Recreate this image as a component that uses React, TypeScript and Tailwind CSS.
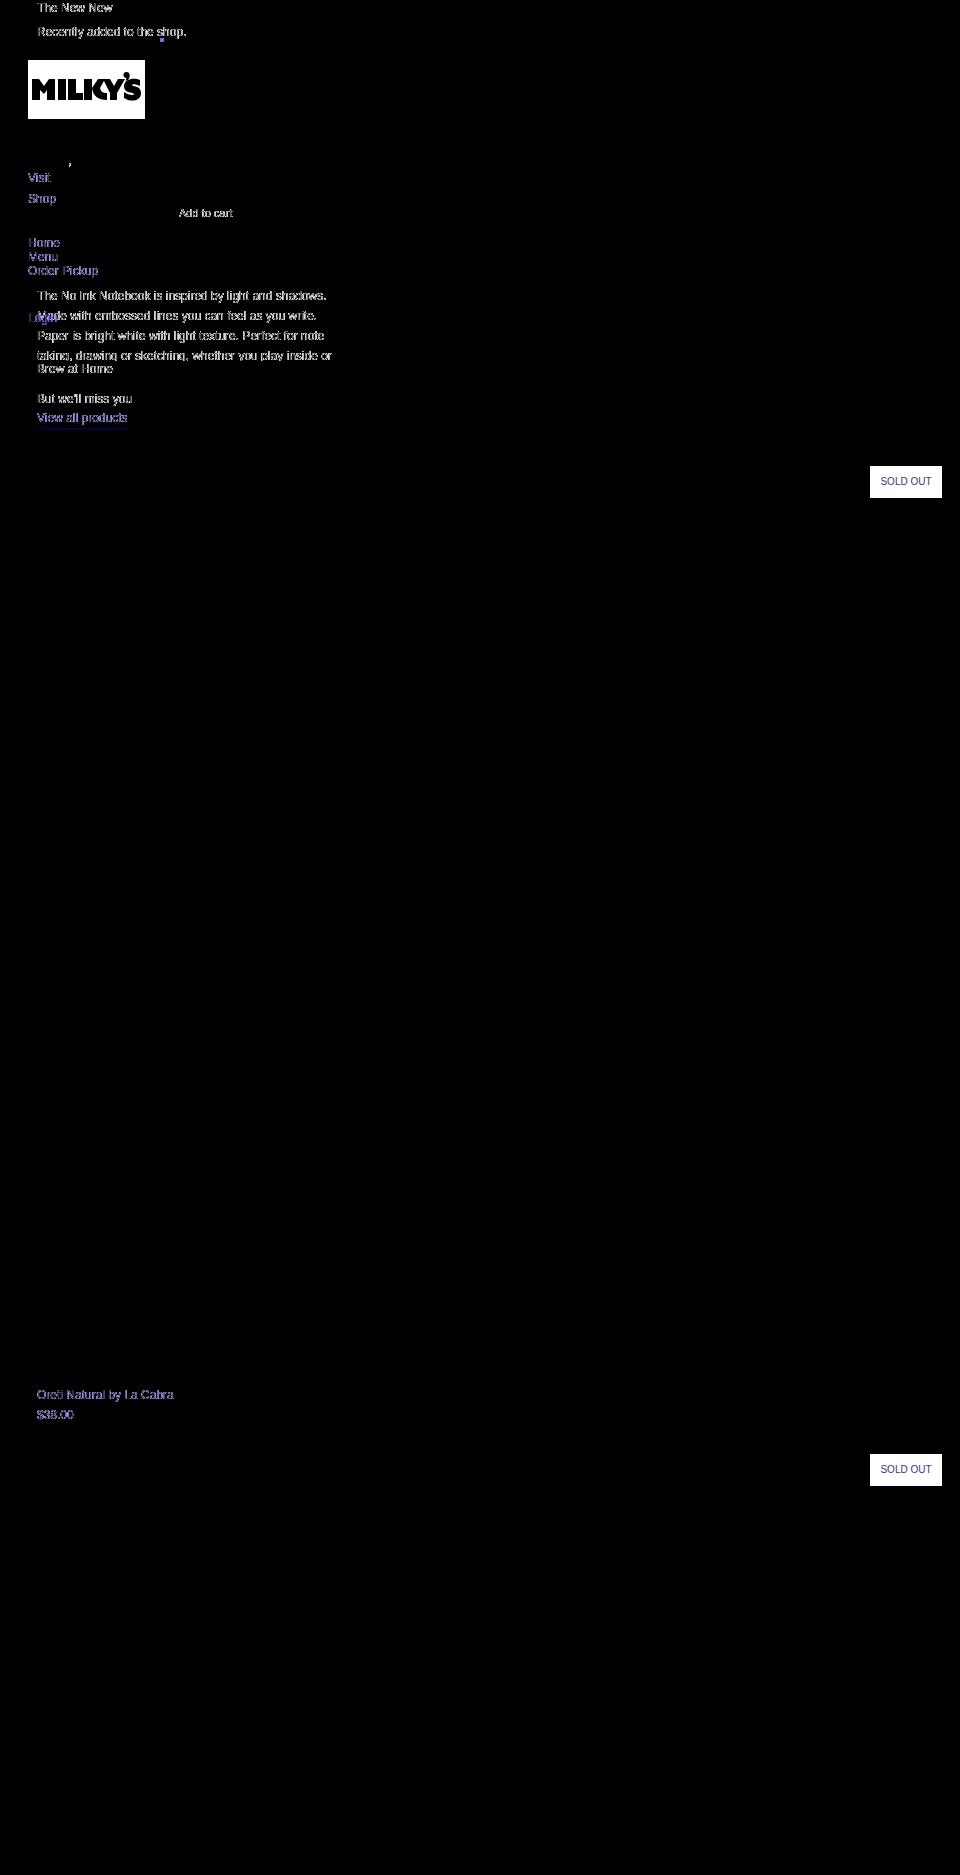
const links = ["Home", "Menu", "Order Pickup"];

function EdgeFilter() {
  return (
    <svg width="0" height="0" className="absolute" aria-hidden="true">
      <filter id="edge" x="-5%" y="-20%" width="110%" height="140%" colorInterpolationFilters="sRGB">
        <feComponentTransfer>
          <feFuncA type="table" tableValues="0 0.85 0.85 0.6 0.25" />
        </feComponentTransfer>
      </filter>
    </svg>
  );
}

function Logo() {
  return (
    <svg viewBox="0 0 117 59" className="block h-[59px] w-[117px] bg-white" role="img" aria-label="Milky's">
      <g fill="#000">
        <path d="M4 19h7l5 7 5-7h6v21h-8V30l-3 4-4-4v10H4z" />
        <path d="M30 19h8v21h-8zM40 19h8v14h7v7H40zM56 19h8v21h-8z" />
        <path d="M64 28l6-9h7l-5 9c1 4 3 5 7 5v7c-9 0-14-4-15-12z" />
        <path d="M75 19h7l4 7 4-7h7l-8 14v7h-7v-7z" />
        <circle cx="98.500" cy="15" r="3" />
        <path d="M101.500 15c0 4-1 5-4 6l2-6z" />
        <path d="M112 20v6c-4-2-8-2-8-1 0 2 9 0 9 8 0 9-11 9-17 5v-6c4 3 10 4 10 2s-10 0-10-8c0-7 10-9 16-6z" />
      </g>
    </svg>
  );
}

function SoldOut() {
  return (
    <span className="flex h-8 w-[72px] items-center justify-center bg-white text-[10px] leading-4 text-[#3c3484]">
      SOLD OUT
    </span>
  );
}

export default function App() {
  return (
    <main className="min-h-screen overflow-hidden bg-black font-['Liberation_Sans',Arial,sans-serif] text-xs leading-5 text-white">
      <EdgeFilter />
      <header className="pl-7">
        <div className="h-[60px] pl-[9px]">
          <h2 className="h-[22px] leading-4 [filter:url(#edge)]">The New New</h2>
          <div className="relative w-fit">
            <p className="[filter:url(#edge)]">Recently added to the shop.</p>
            <span className="absolute top-4 left-[123px] h-1 w-1 bg-[#7474d8]" />
          </div>
        </div>
        <Logo />
        <div className="h-[49px] pt-9 pl-10 leading-3 [filter:url(#edge)]">,</div>
        <nav className="flex flex-col items-start text-[#a8a8ff]">
          <a href="#visit" className="leading-5 [filter:url(#edge)]">Visit</a>
          <a href="#shop" className="mt-px leading-5 [filter:url(#edge)]">Shop</a>
        </nav>
        <button type="button" className="-mt-1 ml-[151px] block h-4 text-[11px] leading-3 [filter:url(#edge)]">
          Add to cart
        </button>
        <nav className="mt-[15px] flex flex-col items-start text-[#a8a8ff]">
          {links.map((label) => (
            <a key={label} href="#menu" className="leading-[14px] [filter:url(#edge)]">{label}</a>
          ))}
        </nav>
      </header>
      <section className="relative mt-2 px-[37px]">
        <p className="h-[75px] max-w-[310px] overflow-hidden [filter:url(#edge)]">
          The No Ink Notebook is inspired by light and shadows. Made with embossed lines you can feel as you write. Paper is bright white with light texture. Perfect for note taking, drawing or sketching, whether you play inside or
        </p>
        <a href="#login" className="absolute top-[22px] left-7 leading-5 text-[#7c7cff] [filter:url(#edge)]">Login</a>
        <h3 className="leading-4 [filter:url(#edge)]">Brew at Home</h3>
        <p className="mt-3 [filter:url(#edge)]">But we'll miss you</p>
        <a href="#products" className="-mt-px block w-fit border-b border-[#000070] text-[#a8a8ff]">
          <span className="block leading-5 [filter:url(#edge)]">View all products</span>
        </a>
      </section>
      <section className="mt-[37px]">
        <article>
          <div className="flex h-[884px] items-start justify-end pr-[18px]">
            <SoldOut />
          </div>
          <a href="#oreti" className="block h-[104px] pt-[35px] pl-[37px] text-[#a8a8ff]">
            <h3 className="[filter:url(#edge)]">Oreti Natural by La Cabra</h3>
            <p className="[filter:url(#edge)]">$38.00</p>
          </a>
        </article>
        <article className="flex justify-end pr-[18px]">
          <SoldOut />
        </article>
      </section>
    </main>
  );
}
